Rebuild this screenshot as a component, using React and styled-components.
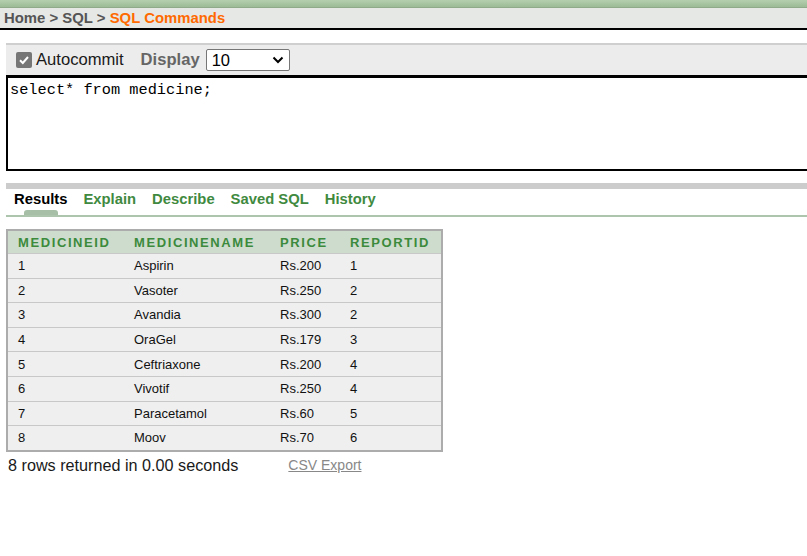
import React from 'react';
import styled, { createGlobalStyle } from 'styled-components';

const GlobalStyle = createGlobalStyle`
  html, body {
    margin: 0;
    padding: 0;
    background: #fff;
    overflow: hidden;
    font-family: Arial, "Liberation Sans", sans-serif;
  }
`;

const rows = [
  [1, 'Aspirin', 'Rs.200', 1],
  [2, 'Vasoter', 'Rs.250', 2],
  [3, 'Avandia', 'Rs.300', 2],
  [4, 'OraGel', 'Rs.179', 3],
  [5, 'Ceftriaxone', 'Rs.200', 4],
  [6, 'Vivotif', 'Rs.250', 4],
  [7, 'Paracetamol', 'Rs.60', 5],
  [8, 'Moov', 'Rs.70', 6],
];

const tabs = ['Results', 'Explain', 'Describe', 'Saved SQL', 'History'];

const Page = styled.div`
  width: 830px;
`;

const TopBar = styled.div`
  height: 7px;
  background: linear-gradient(#b4cfae, #9dbb97);
  border-bottom: 1px solid #8faa89;
`;

const Crumbs = styled.div`
  height: 20px;
  display: flex;
  align-items: center;
  padding-left: 4px;
  background: #e6e8e6;
  border-bottom: 2px solid #000;
  font-size: 14.9px;
  font-weight: bold;
  color: #555;
`;

const Current = styled.span`
  color: #ff6a00;
`;

const Main = styled.div`
  padding: 13px 0 0 6px;
`;

const Toolbar = styled.div`
  height: 30px;
  display: flex;
  align-items: center;
  padding-left: 10px;
  background: #ececec;
  border-top: 2px solid #cfcfcf;
`;

const Check = styled.span`
  width: 16px;
  height: 16px;
  border-radius: 2px;
  background: #767676;
  display: inline-flex;
  align-items: center;
  justify-content: center;
  margin-right: 4px;
`;

const Label = styled.span`
  font-size: 16.6px;
  font-weight: ${p => (p.bold ? 'bold' : 'normal')};
  color: ${p => (p.bold ? '#666' : '#1a1a1a')};
  margin-left: ${p => p.gap || 0}px;
`;

const Select = styled.div`
  width: 72px;
  height: 20px;
  margin-left: 6px;
  border: 1px solid #767676;
  border-radius: 2px;
  background: #fff;
  display: flex;
  align-items: center;
  justify-content: space-between;
  padding: 0 5px;
  font-size: 16.5px;
  color: #000;
`;

const Editor = styled.div`
  box-sizing: border-box;
  height: 96px;
  border: 2px solid #000;
  border-top-width: 3px;
  padding: 3px 2px;
  font-family: "Liberation Mono", "DejaVu Sans Mono", monospace;
  font-size: 15.3px;
  color: #000;
`;

const GrayBar = styled.div`
  margin-top: 12px;
  height: 6px;
  background: #cccccc;
`;

const TabRow = styled.div`
  height: 28px;
  display: flex;
  gap: 16px;
  padding-left: 8px;
  border-bottom: 2px solid #adc4ad;
  box-sizing: border-box;
`;

const Tab = styled.div`
  position: relative;
  font-size: 14.8px;
  font-weight: bold;
  padding-top: 2px;
  color: ${p => (p.active ? '#000' : '#3f8a3f')};
  &::after {
    content: '';
    display: ${p => (p.active ? 'block' : 'none')};
    position: absolute;
    left: 10px;
    right: 9px;
    bottom: 0;
    height: 5px;
    border-radius: 3px 3px 0 0;
    background: #a6bfa6;
  }
`;

const Table = styled.table`
  margin-top: 12px;
  border-collapse: collapse;
  border: 2px solid #acacac;
  width: 437px;
`;

const Th = styled.th`
  height: 22px;
  padding: 0 0 0 10px;
  text-align: left;
  background: #cddccd;
  color: #3c8a3c;
  font-size: 13px;
  letter-spacing: 1.6px;
  font-weight: bold;
  width: ${p => p.w}px;
`;

const Td = styled.td`
  height: 23.6px;
  padding: 0 0 0 10px;
  background: #efefef;
  border-top: 1px solid #c8c8c8;
  font-size: 13px;
  color: #111;
`;

const Footer = styled.div`
  display: flex;
  align-items: center;
  padding: 4px 0 0 2px;
`;

const Summary = styled.span`
  font-size: 16.2px;
  color: #1a1a1a;
`;

const Csv = styled.a`
  margin-left: 50px;
  font-size: 14px;
  color: #888;
  text-decoration: underline;
`;

export default function App() {
  return (
    <Page>
      <GlobalStyle />
      <TopBar />
      <Crumbs>
        Home &gt; SQL &gt;&nbsp;<Current>SQL Commands</Current>
      </Crumbs>
      <Main>
        <Toolbar>
          <Check>
            <svg width="12" height="12" viewBox="0 0 12 12">
              <path d="M2 6.3 L4.8 9 L10 3" stroke="#fff" strokeWidth="2" fill="none" />
            </svg>
          </Check>
          <Label>Autocommit</Label>
          <Label bold gap={17}>Display</Label>
          <Select>
            <span>10</span>
            <svg width="12" height="8" viewBox="0 0 12 8">
              <path d="M1.5 1.5 L6 6 L10.5 1.5" stroke="#000" strokeWidth="2" fill="none" />
            </svg>
          </Select>
        </Toolbar>
        <Editor>select* from medicine;</Editor>
        <GrayBar />
        <TabRow>
          {tabs.map((t, i) => (
            <Tab key={t} active={i === 0}>{t}</Tab>
          ))}
        </TabRow>
        <Table>
          <thead>
            <tr>
              <Th w={106}>MEDICINEID</Th>
              <Th w={136}>MEDICINENAME</Th>
              <Th w={60}>PRICE</Th>
              <Th>REPORTID</Th>
            </tr>
          </thead>
          <tbody>
            {rows.map(r => (
              <tr key={r[0]}>
                {r.map((c, i) => (
                  <Td key={i}>{c}</Td>
                ))}
              </tr>
            ))}
          </tbody>
        </Table>
        <Footer>
          <Summary>8 rows returned in 0.00 seconds</Summary>
          <Csv>CSV Export</Csv>
        </Footer>
      </Main>
    </Page>
  );
}
